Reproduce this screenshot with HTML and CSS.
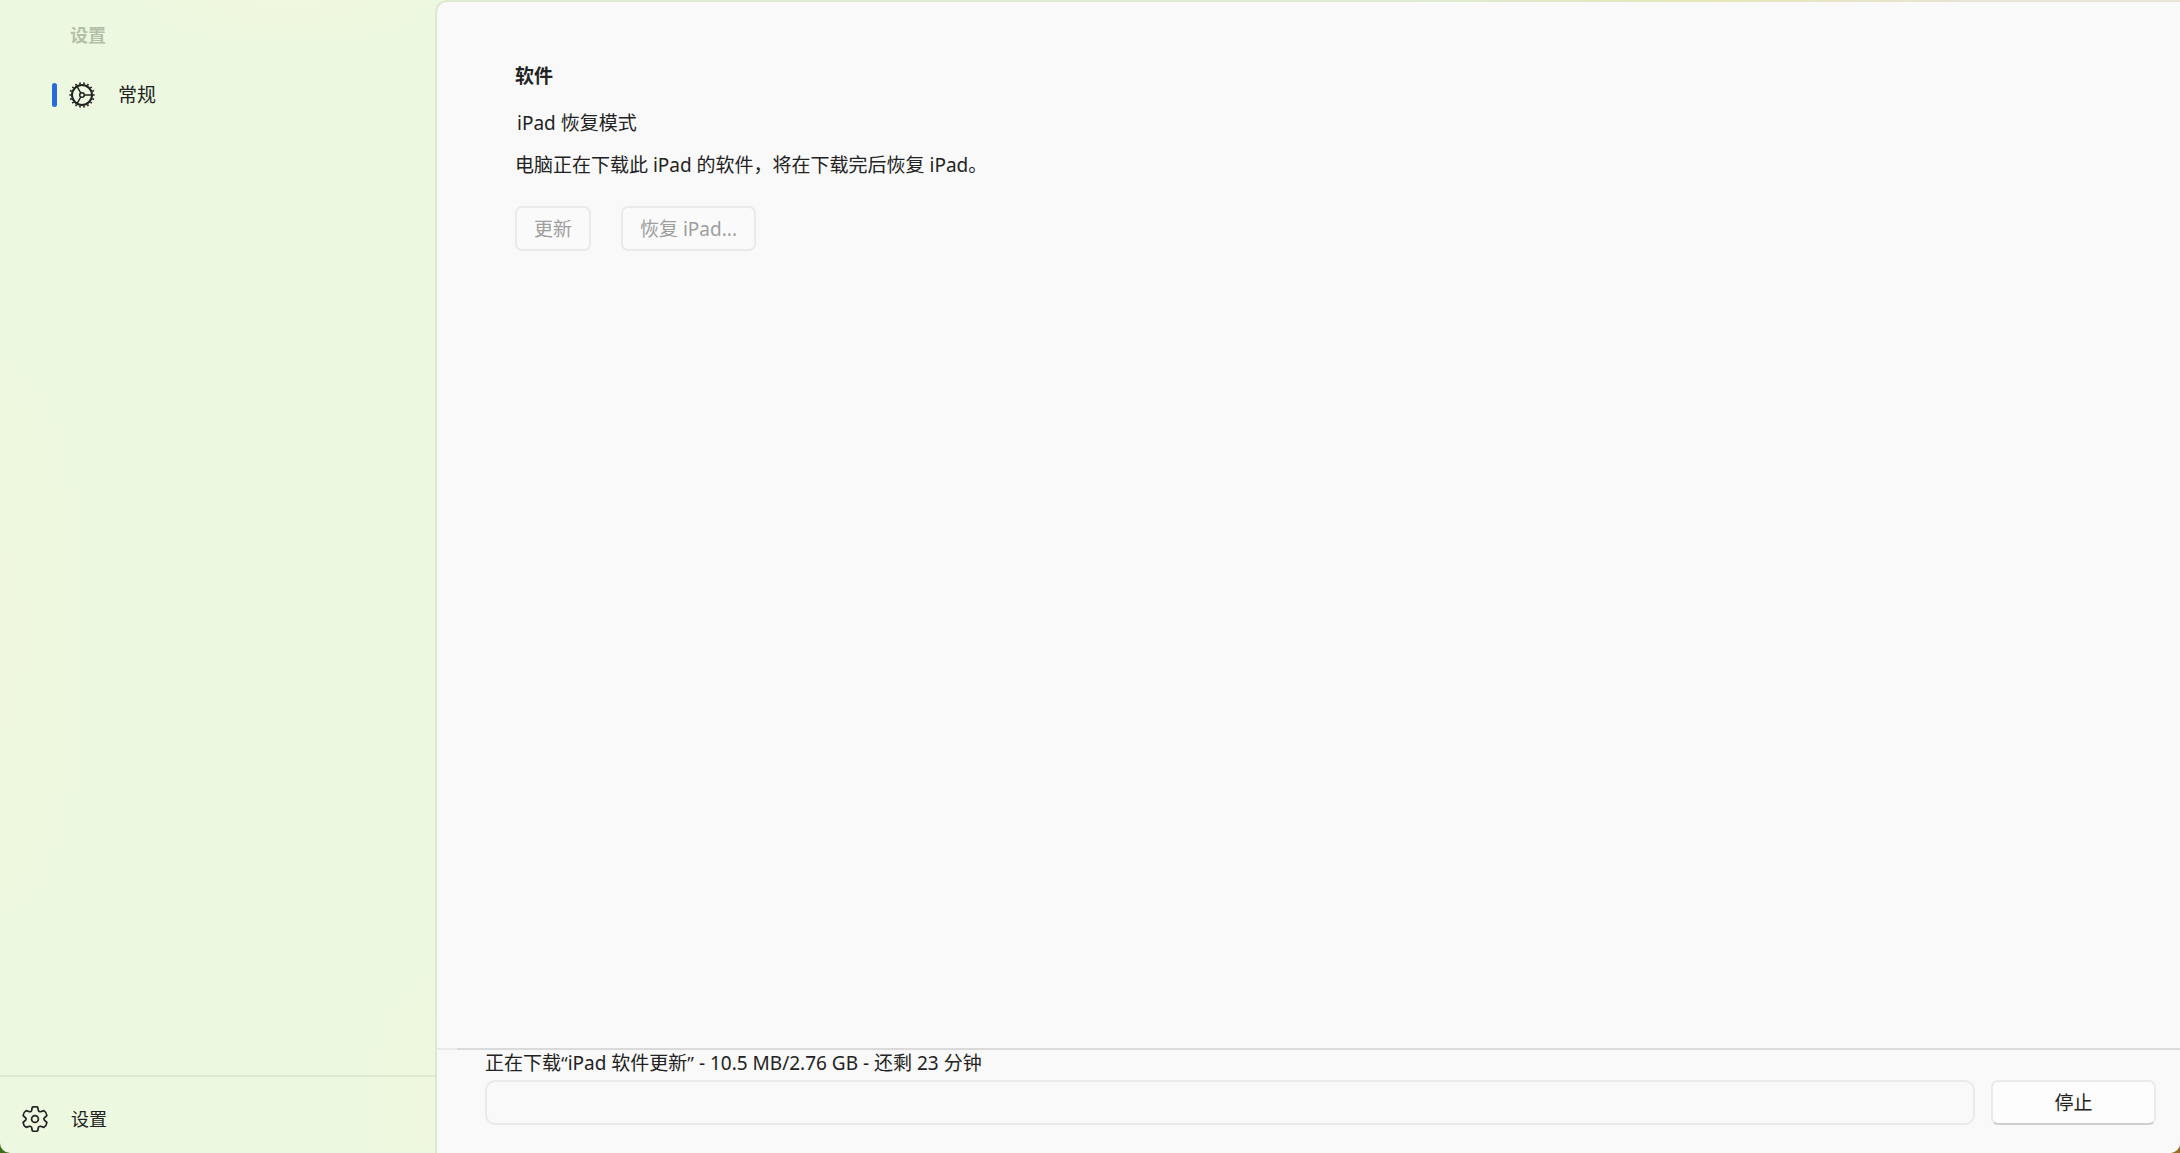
FILE: index.html
```html
<!DOCTYPE html>
<html lang="zh-CN">
<head>
  <meta charset="UTF-8">
  <meta name="viewport" content="width=device-width, initial-scale=1.0">
  <title>设置</title>
  <link rel="stylesheet" href="styles.css">
</head>
<body>
  <div class="window">
    <!-- Sidebar -->
    <nav class="sidebar">
      <h2 class="sidebar-title">设置</h2>
      <a class="nav-item" href="#general">
        <svg class="icon" viewBox="0 0 26 26" fill="none" stroke="#222" aria-hidden="true">
          <circle cx="13" cy="13" r="10" stroke-width="2"/>
          <circle cx="13" cy="13" r="11.8" stroke-width="1.8" pathLength="180" stroke-dasharray="4 6" stroke-dashoffset="2"/>
          <circle cx="13" cy="13" r="2.3" stroke-width="1.5"/>
          <path d="M15.3 13H23M11.8 11L8 4.4M11.8 15L8 21.6" stroke-width="1.5"/>
        </svg>
        <span>常规</span>
      </a>
      <a class="settings-link" href="#settings">
        <svg class="icon" viewBox="0 0 26 26" fill="none" stroke="#222" stroke-width="1.7" stroke-linejoin="round" aria-hidden="true">
          <path d="M10.3 1.2Q13 -.1 15.7 1.2L16.4 4.6Q17 6 18.6 5.7L21.9 4.6Q24.6 6.3 24.9 9.5L22.4 11.8Q21.5 13 22.4 14.2L24.9 16.5Q24.6 19.7 21.9 21.4L18.6 20.3Q17 20 16.4 21.4L15.7 24.8Q13 26.1 10.3 24.8L9.6 21.4Q9 20 7.4 20.3L4.1 21.4Q1.4 19.7 1.1 16.5L3.6 14.2Q4.5 13 3.6 11.8L1.1 9.5Q1.4 6.3 4.1 4.6L7.4 5.7Q9 6 9.6 4.6Z"/>
          <circle cx="13" cy="13" r="3.4"/>
        </svg>
        <span>设置</span>
      </a>
    </nav>

    <!-- Content -->
    <main class="main">
      <section class="software" id="general">
        <h1>软件</h1>
        <p class="mode">iPad 恢复模式</p>
        <p class="message">电脑正在下载此 iPad 的软件，将在下载完后恢复 iPad。</p>
        <div class="actions">
          <button type="button" disabled>更新</button>
          <button type="button" disabled>恢复 iPad...</button>
        </div>
      </section>

      <!-- Download status -->
      <footer class="download">
        <label class="status" for="download-progress">正在下载<span class="quote">“</span>iPad 软件更新<span class="quote">”</span> - 10.5 MB/2.76 GB - 还剩 23 分钟</label>
        <div class="download-row">
          <progress id="download-progress" value="0" max="100"></progress>
          <button type="button" class="stop">停止</button>
        </div>
      </footer>
    </main>
  </div>
</body>
</html>
```

FILE: styles.css
```css
/* General styling */
* {
  box-sizing: border-box;
}

body {
  margin: 0;
  background: linear-gradient(90deg, #3c6e1c, #967020);
  color: #222;
  font-family: "Noto Sans", "Noto Sans CJK SC", sans-serif;
  font-size: 19px;
  line-height: 28px;
}

h1,
h2,
p {
  margin: 0;
}

button {
  height: 45px;
  padding: 0 17px;
  border: 2px solid #eaeaea;
  border-radius: 7px;
  background: #fdfdfd;
  color: #222;
  font: inherit;
}

button:disabled {
  background: #fafafa;
  color: #9e9e9e;
}

/* Window */
.window {
  display: flex;
  min-height: 100vh;
  border-radius: 0 0 10px 10px;
  overflow: hidden;
  background:
    radial-gradient(ellipse 170px 50px at 290px 0, #f0f8de, transparent),
    radial-gradient(ellipse 100px 340px at 0 640px, #eff8dd, transparent),
    radial-gradient(ellipse 80px 160px at 437px 1110px, #eff8dd, transparent),
    linear-gradient(90deg, #ecf8e0 0, #ecf8e0 65%, #f4f7c4 78%, #f5f3e0 90%);
}

/* Sidebar */
.sidebar {
  display: flex;
  flex-direction: column;
  width: 20%;
  flex-shrink: 0;
}

.sidebar-title {
  padding: 21px 70px 0;
  color: #b3bfa8;
  font-size: 18px;
  font-weight: 700;
  line-height: 28px;
}

.nav-item,
.settings-link {
  display: flex;
  align-items: center;
  color: inherit;
  text-decoration: none;
}

.nav-item {
  margin: 32px 52px 0;
  gap: 12px;
}

.nav-item::before {
  content: "";
  width: 5px;
  height: 24px;
  border-radius: 3px;
  background: #2a6bdc;
}

.nav-item span {
  margin-left: 11px;
}

.icon {
  width: 26px;
  height: 26px;
}

.settings-link {
  height: 78px;
  margin-top: auto;
  padding: 8px 22px 0;
  gap: 23px;
  border-top: 2px solid #dfead2;
  font-size: 18px;
}

/* Content */
.main {
  display: flex;
  flex: 1;
  flex-direction: column;
  margin-left: -1px;
  border: solid rgba(0, 0, 0, 0.06);
  border-width: 2px 0 0 2px;
  border-radius: 12px 0 0 0;
  background: #f9f9f9;
  background-clip: padding-box;
}

.software {
  flex: 1;
  padding: 60px 78px;
}

.software h1 {
  font-size: 19px;
  line-height: 28px;
}

.mode {
  padding: 19px 2px 14px;
}

.actions {
  display: flex;
  gap: 30px;
  margin-top: 27px;
}

/* Download status */
.download {
  padding: 0 24px 28px 48px;
  background: linear-gradient(90deg, #eaeaea 20px, #dadada 20px) top / 100% 2px no-repeat;
}

.status {
  display: block;
  padding-bottom: 2px;
  line-height: 30px;
}

.quote {
  font-family: "Open Sans", sans-serif;
}

.download-row {
  display: flex;
  gap: 16px;
}

progress {
  flex: 1;
  height: 45px;
  border: 2px solid #eaeaea;
  border-radius: 10px;
  background: #f9f9f9;
  appearance: none;
}

progress::-webkit-progress-bar {
  background: transparent;
}

progress::-webkit-progress-value {
  background: #2a6bdc;
}

.stop {
  width: 165px;
  border-bottom-color: #cecece;
}
```
